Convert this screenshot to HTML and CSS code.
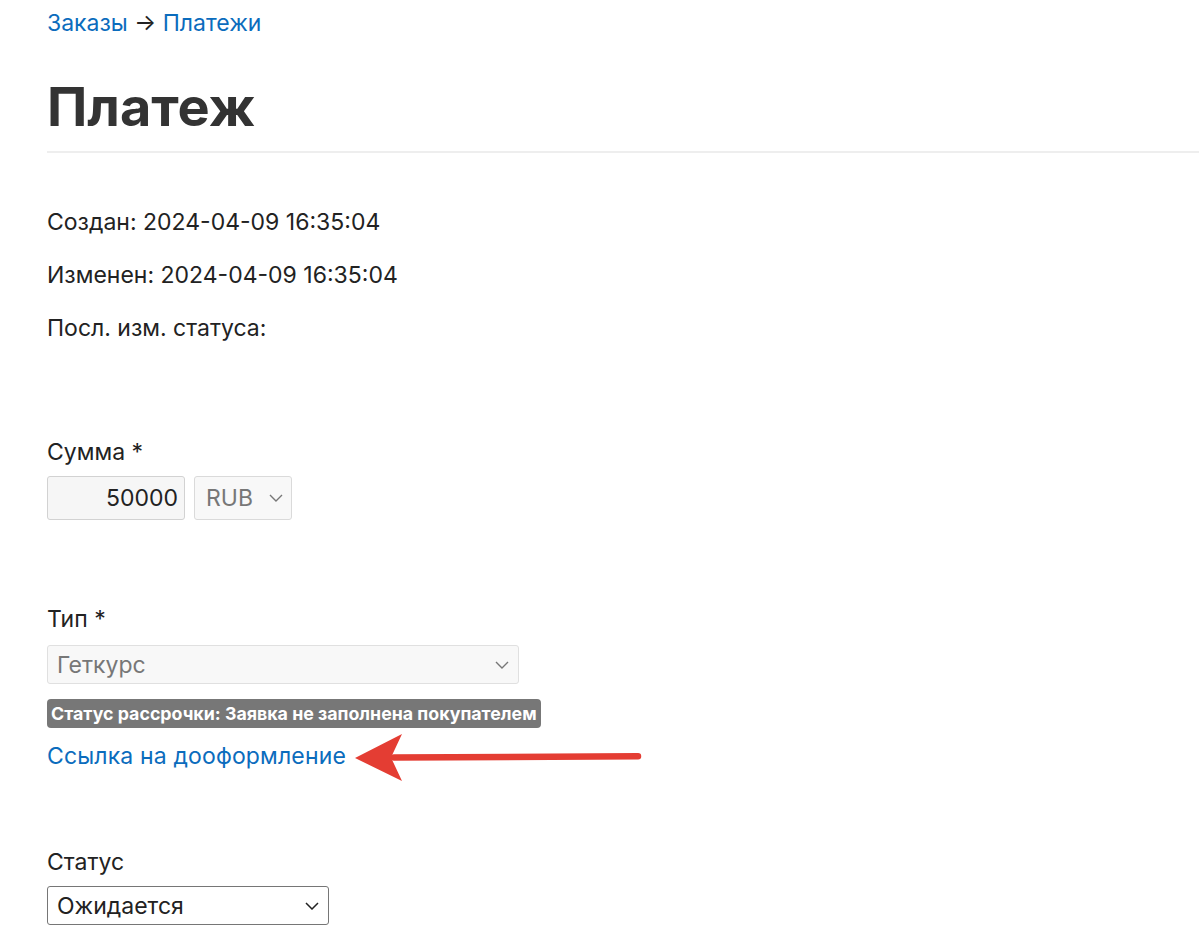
FILE: index.html
```html
<!DOCTYPE html>
<html lang="ru">
<head>
<meta charset="utf-8">
<title>Платеж</title>
<link rel="stylesheet" href="styles.css">
</head>
<body>
<div class="page">
  <nav class="crumbs"><a href="#">Заказы</a> → <a href="#">Платежи</a></nav>
  <h1 class="title">Платеж</h1>

  <div class="meta">
    <p>Создан: 2024-04-09 16:35:04</p>
    <p>Изменен: 2024-04-09 16:35:04</p>
    <p>Посл. изм. статуса:</p>
  </div>

  <div class="field field-sum">
    <label class="label">Сумма *</label>
    <div class="row">
      <div class="input input-sum">50000</div>
      <div class="select select-cur">
        <span>RUB</span>
        <svg class="chev" width="14" height="8" viewBox="0 0 14 8"><path d="M1 1l6 6 6-6" fill="none" stroke="#777" stroke-width="1.4"/></svg>
      </div>
    </div>
  </div>

  <div class="field field-type">
    <label class="label">Тип *</label>
    <div class="select select-type">
      <span>Геткурс</span>
      <svg class="chev" width="14" height="8" viewBox="0 0 14 8"><path d="M1 1l6 6 6-6" fill="none" stroke="#777" stroke-width="1.4"/></svg>
    </div>
    <div class="badge">Статус рассрочки: Заявка не заполнена покупателем</div>
    <div class="link-row">
      <a href="#" class="link">Ссылка на дооформление</a>
      <svg class="arrow" width="295" height="56" viewBox="0 0 295 56">
        <path d="M44 28.6 L288 27.2" stroke="#e43d33" stroke-width="6.5" stroke-linecap="round" fill="none"/>
        <path d="M5 29 L52 5 L41 28.5 L52 52 Z" fill="#e43d33"/>
      </svg>
    </div>
  </div>

  <div class="field field-status">
    <label class="label">Статус</label>
    <div class="select select-status">
      <span>Ожидается</span>
      <svg class="chev" width="14" height="8" viewBox="0 0 14 8"><path d="M1 1l6 6 6-6" fill="none" stroke="#222" stroke-width="1.5"/></svg>
    </div>
  </div>
</div>
</body>
</html>
```

FILE: styles.css
```css
html, body {
  margin: 0;
  padding: 0;
  background: #ffffff;
}
body {
  font-family: Inter, "Noto Sans", "Liberation Sans", sans-serif;
  font-size: 23px;
  line-height: 28px;
  color: #222222;
}
.page {
  padding: 9px 0 0 47px;
}
a {
  color: #0b6cbd;
  text-decoration: none;
}
.crumbs {
  color: #222;
  height: 28px;
}
.title {
  margin: 38px 0 0 0;
  font-size: 54px;
  line-height: 64px;
  font-weight: 700;
  color: #333333;
  padding-bottom: 12px;
  border-bottom: 2px solid #eeeeee;
}
.meta {
  margin-top: 55px;
}
.meta p {
  margin: 0 0 25px 0;
}
.meta p:last-child {
  margin-bottom: 0;
}
.field {
  display: flex;
  flex-direction: column;
  align-items: flex-start;
}
.label {
  display: block;
}
.field-sum {
  margin-top: 96px;
}
.row {
  display: flex;
  gap: 9px;
  margin-top: 10px;
}
.input {
  box-sizing: border-box;
  height: 44px;
  border: 1px solid #d2d2d2;
  border-radius: 3px;
  background: #f6f6f6;
  text-align: right;
  padding: 0 6px;
  line-height: 42px;
  color: #222;
}
.input-sum {
  width: 138px;
}
.select {
  box-sizing: border-box;
  display: flex;
  align-items: center;
  justify-content: space-between;
  border-radius: 3px;
  padding: 0 8px 0 9px;
}
.select-cur {
  width: 98px;
  height: 44px;
  border: 1px solid #dadada;
  background: #f8f8f8;
  color: #777;
  padding-left: 11px;
}
.field-type {
  margin-top: 85px;
}
.select-type {
  margin-top: 12px;
  width: 472px;
  height: 39px;
  border: 1px solid #e0e0e0;
  background: #f8f8f8;
  color: #777;
  padding-right: 9px;
}
.badge {
  margin-top: 15px;
  background: #777777;
  color: #ffffff;
  font-weight: 700;
  font-size: 17.8px;
  line-height: 29px;
  height: 29px;
  padding: 0 4px;
  border-radius: 4px;
}
.link {
  letter-spacing: 0.15px;
}
.link-row {
  position: relative;
  margin-top: 14px;
}
.arrow {
  position: absolute;
  left: 303px;
  top: -13px;
}
.field-status {
  margin-top: 78px;
}
.select-status {
  margin-top: 10px;
  width: 282px;
  height: 39px;
  border: 1px solid #767676;
  background: #ffffff;
  color: #222;
  padding-right: 9px;
}
```
